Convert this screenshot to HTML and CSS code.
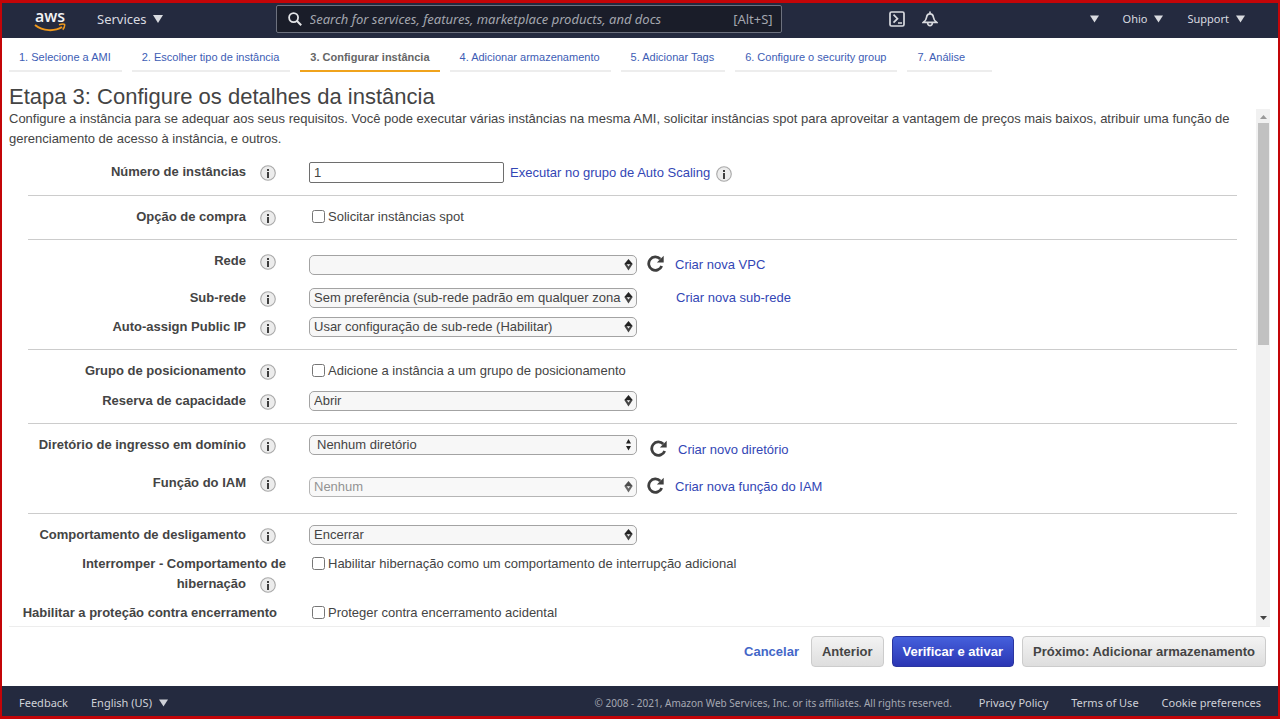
FILE: index.html
```html
<!DOCTYPE html>
<html lang="pt-BR">
<head>
<meta charset="utf-8">
<title>Configure os detalhes da instância</title>
<link rel="stylesheet" href="styles.css">
</head>
<body>
<svg class="sprite" aria-hidden="true">
  <symbol id="refresh" viewBox="0 0 17 17"><path d="M14.700 11A6.700 6.700 0 1 1 13.300 4" fill="none" stroke="#3f3f3f" stroke-width="2.800"/><path d="M16.700.8v6.600H9.900z" fill="#3f3f3f"/></symbol>
  <symbol id="info" viewBox="0 0 16 16"><circle cx="8" cy="8" r="7.300" fill="#ececec" stroke="#a9a9a9" stroke-width="1.100"/><path d="M7 4h2v2H7zM7 7h2v6H7z" fill="#3f3f3f"/></symbol>
  <symbol id="caret" viewBox="0 0 10 8"><path d="M0 0h10L5 8z" fill="currentColor"/></symbol>
</svg>

<header class="topbar">
  <a class="logo" href="#"><span>aws</span>
    <svg viewBox="0 0 32 10" aria-hidden="true"><path d="M1 2c8 6.500 20 6.500 27 2" fill="none" stroke="#f0991c" stroke-width="2"/><path d="M25 1.800c3-1 4.800-.9 5.600-.4.200 1.800-.5 3.800-1.900 5.200" fill="none" stroke="#f0991c" stroke-width="1.500"/></svg>
  </a>
  <button class="nav-item services">Services <svg class="caret"><use href="#caret"/></svg></button>
  <label class="search">
    <svg viewBox="0 0 14 14" aria-hidden="true"><circle cx="5.600" cy="5.600" r="4.500" fill="none" stroke="#e4e5e8" stroke-width="1.800"/><path d="M8.800 8.800l4.400 4.400" stroke="#e4e5e8" stroke-width="2"/></svg>
    <input type="search" aria-label="Search" placeholder="Search for services, features, marketplace products, and docs">
    <span>[Alt+S]</span>
  </label>
  <nav class="tools">
    <button class="nav-item" aria-label="CloudShell"><svg class="tool" viewBox="0 0 16 16"><rect x="1" y="1" width="14" height="14" rx="1.500" fill="none" stroke="#d9dbe0" stroke-width="1.700"/><path d="M4.500 3.700l4 4-4 4M9 12h4" fill="none" stroke="#d9dbe0" stroke-width="1.700"/></svg></button>
    <button class="nav-item" aria-label="Notifications"><svg class="tool" viewBox="0 0 16 16"><path d="M8 .5v2M1.500 11.300h13C12.800 10 11.800 8.700 11.500 6.500 11.200 4 9.900 2.800 8 2.800S4.800 4 4.500 6.500c-.3 2.200-1.300 3.500-3 4.800zM5.600 12c.2 1.800 1.100 2.700 2.400 2.700s2.200-.9 2.400-2.700" fill="none" stroke="#d9dbe0" stroke-width="1.700"/></svg></button>
    <button class="nav-item account" aria-label="Account"><svg class="caret"><use href="#caret"/></svg></button>
    <button class="nav-item">Ohio <svg class="caret"><use href="#caret"/></svg></button>
    <button class="nav-item">Support <svg class="caret"><use href="#caret"/></svg></button>
  </nav>
</header>

<nav class="steps">
  <a href="#">1. Selecione a AMI</a>
  <a href="#">2. Escolher tipo de instância</a>
  <a href="#" class="current" aria-current="step">3. Configurar instância</a>
  <a href="#">4. Adicionar armazenamento</a>
  <a href="#">5. Adicionar Tags</a>
  <a href="#">6. Configure o security group</a>
  <a href="#">7. Análise</a>
</nav>

<h1>Etapa 3: Configure os detalhes da instância</h1>

<main class="panel">
  <form class="content" id="details">
    <p class="intro">Configure a instância para se adequar aos seus requisitos. Você pode executar várias instâncias na mesma AMI, solicitar instâncias spot para aproveitar a vantagem de preços mais baixos, atribuir uma função de gerenciamento de acesso à instância, e outros.</p>

    <section class="group">
      <div class="row"><div class="label"><label for="count">Número de instâncias</label><svg class="info"><use href="#info"/></svg></div>
        <div class="control"><input class="count" id="count" type="text" value="1"><a class="beside" href="#">Executar no grupo de Auto Scaling</a><svg class="info small"><use href="#info"/></svg></div></div>
    </section>
    <hr>
    <section class="group">
      <div class="row"><div class="label"><span>Opção de compra</span><svg class="info"><use href="#info"/></svg></div>
        <div class="control"><label class="check"><input type="checkbox">Solicitar instâncias spot</label></div></div>
    </section>
    <hr>
    <section class="group compact">
      <div class="row lowered"><div class="label"><label for="vpc">Rede</label><svg class="info"><use href="#info"/></svg></div>
        <div class="control"><select id="vpc"><option></option></select><button type="button" class="reload" aria-label="Atualizar"><svg><use href="#refresh"/></svg></button><a href="#">Criar nova VPC</a></div></div>
      <div class="row"><div class="label"><label for="subnet">Sub-rede</label><svg class="info"><use href="#info"/></svg></div>
        <div class="control"><select id="subnet"><option>Sem preferência (sub-rede padrão em qualquer zona de disponibilidade)</option></select><a class="aligned" href="#">Criar nova sub-rede</a></div></div>
      <div class="row"><div class="label"><label for="ip">Auto-assign Public IP</label><svg class="info"><use href="#info"/></svg></div>
        <div class="control"><select id="ip"><option>Usar configuração de sub-rede (Habilitar)</option></select></div></div>
    </section>
    <hr>
    <section class="group">
      <div class="row"><div class="label"><span>Grupo de posicionamento</span><svg class="info"><use href="#info"/></svg></div>
        <div class="control"><label class="check"><input type="checkbox">Adicione a instância a um grupo de posicionamento</label></div></div>
      <div class="row"><div class="label"><label for="capacity">Reserva de capacidade</label><svg class="info"><use href="#info"/></svg></div>
        <div class="control"><select id="capacity"><option>Abrir</option></select></div></div>
    </section>
    <hr>
    <section class="group">
      <div class="row directory"><div class="label"><label for="dir">Diretório de ingresso em domínio</label><svg class="info"><use href="#info"/></svg></div>
        <div class="control"><select id="dir" class="plain"><option>Nenhum diretório</option></select><div class="actions"><button type="button" class="reload" aria-label="Atualizar"><svg><use href="#refresh"/></svg></button><a href="#">Criar novo diretório</a></div></div></div>
      <div class="row lowered"><div class="label"><label for="iam">Função do IAM</label><svg class="info"><use href="#info"/></svg></div>
        <div class="control"><select id="iam" disabled><option>Nenhum</option></select><button type="button" class="reload" aria-label="Atualizar"><svg><use href="#refresh"/></svg></button><a href="#">Criar nova função do IAM</a></div></div>
    </section>
    <hr>
    <section class="group compact">
      <div class="row"><div class="label"><label for="shutdown">Comportamento de desligamento</label><svg class="info"><use href="#info"/></svg></div>
        <div class="control"><select id="shutdown"><option>Encerrar</option></select></div></div>
      <div class="row"><div class="label"><span>Interromper - Comportamento de hibernação</span><svg class="info"><use href="#info"/></svg></div>
        <div class="control"><label class="check"><input type="checkbox">Habilitar hibernação como um comportamento de interrupção adicional</label></div></div>
      <div class="row"><div class="label long"><span>Habilitar a proteção contra encerramento</span></div>
        <div class="control"><label class="check"><input type="checkbox">Proteger contra encerramento acidental</label></div></div>
    </section>
  </form>
  <div class="scrollbar" aria-hidden="true"><svg class="up" viewBox="0 0 7 4"><path d="M0 4l3.500-4L7 4z"/></svg><div class="track"><div class="thumb"></div></div><svg class="down" viewBox="0 0 7 4"><path d="M0 0h7L3.500 4z"/></svg></div>
</main>

<div class="buttons">
  <a href="#">Cancelar</a>
  <button>Anterior</button>
  <button class="primary">Verificar e ativar</button>
  <button>Próximo: Adicionar armazenamento</button>
</div>

<footer class="footer">
  <a href="#">Feedback</a>
  <button class="nav-item">English (US) <svg class="caret"><use href="#caret"/></svg></button>
  <small>© 2008 - 2021, Amazon Web Services, Inc. or its affiliates. All rights reserved.</small>
  <a href="#">Privacy Policy</a>
  <a href="#">Terms of Use</a>
  <a href="#">Cookie preferences</a>
</footer>
</body>
</html>
```
FILE: styles.css
```css
* { box-sizing: border-box; }

body {
  margin: 0;
  height: 100vh;
  display: flex;
  flex-direction: column;
  border: solid #c30508;
  border-width: 3px 2px;
  background: #fff;
  color: #444;
  font: 13px/20px "Liberation Sans", Arial, sans-serif;
}

a { color: #3346b5; text-decoration: none; }
button, input, select { font: inherit; color: inherit; }
button { cursor: pointer; }
.sprite { display: none; }

/* Top bar */
.topbar {
  display: flex;
  align-items: center;
  flex: none;
  height: 35px;
  padding: 0 33px 3px 32px;
  background: #242a3f;
  color: #d9dbe0;
  font-family: "Noto Sans", sans-serif;
}
.logo {
  display: flex;
  flex-direction: column;
  align-items: center;
  width: 32px;
  padding-top: 3px;
  color: #f3f3f5;
  font: 600 16px/14px "Open Sans", sans-serif;
}
.logo svg { width: 32px; height: 10px; }
.nav-item {
  display: flex;
  align-items: center;
  gap: 7px;
  padding: 0;
  border: 0;
  background: none;
  font-size: 11px;
}
.caret { width: 9px; height: 8px; }
.services { margin: 0 113px 0 31px; font-size: 13px; }
.services .caret { width: 10px; margin-left: -1px; }
.search {
  display: flex;
  align-items: center;
  flex: 0 1 506px;
  height: 28px;
  padding: 0 8px 0 11px;
  border: 1px solid #6d717e;
  border-radius: 2px;
  background: #1a1d29;
  color: #a3a6ae;
}
.search svg { width: 14px; height: 14px; }
.search input {
  flex: 1;
  min-width: 0;
  margin: 0 8px;
  padding: 0;
  border: 0;
  outline: 0;
  background: none;
}
.search input::placeholder { color: #a3a6ae; font-style: italic; }
.tools { display: flex; align-items: center; flex: 1; margin-left: 107px; }
.tools .nav-item + .nav-item { margin-left: 24px; }
.tools .nav-item:nth-child(2) { margin-left: 17px; }
.tools .nav-item.account { margin-left: auto; }
.tool { width: 16px; height: 16px; }

/* Wizard steps */
.steps { display: flex; gap: 10px; padding: 8px 7px 0; font-size: 11px; }
.steps a {
  height: 26px;
  padding: 1px 10px 0;
  border-bottom: 2px solid #ededed;
  color: #3d5db5;
  white-space: nowrap;
}
.steps a:not(.current) { padding-right: 11px; }
.steps a:last-child { min-width: 85px; }
.steps .current { border-color: #f0a31c; color: #666; font-weight: bold; }

h1 { margin: 13px 7px 0; font-size: 22px; line-height: 24px; font-weight: normal; }

/* Scrolling form */
.panel {
  display: flex;
  flex: 1;
  min-height: 0;
  margin: 0 8px 0 7px;
  border-bottom: 1px solid #ededed;
}
.content { flex: 1; min-width: 0; overflow: hidden; }
.intro { margin: 0 0 2px; }
hr { margin: 0 19px; border: 0; border-top: 1px solid #ccc; }
.group { display: flex; flex-direction: column; gap: 10px; padding: 11px 0 12px; }
.compact { gap: 9px; }
.row { display: grid; grid-template-columns: 277px 1fr; column-gap: 23px; align-items: start; }
.row.lowered { min-height: 28px; }
.row.lowered .control { padding-top: 4px; }
.row.directory { min-height: 28px; }
.directory .actions { display: flex; align-items: center; padding: 10px 0 0 3px; }
.directory .control { height: 20px; }
.label { height: 20px; text-align: right; font-weight: bold; }
.label:has(> span) { height: auto; padding-left: 30px; }
.label.long { padding: 0 9px 0 0; }
.info { width: 16px; height: 16px; vertical-align: -4px; margin: 0 10px 0 14px; }
.label .info { margin-bottom: -1px; }
.info.small { margin: 2px 0 0 6px; }
.control { display: flex; align-items: center; }
.count {
  width: 195px;
  height: 21px;
  padding: 0 4px;
  border: 1px solid #6e6e6e;
  border-radius: 2px;
}
.beside { margin-left: 6px; }
.check { display: flex; align-items: center; }
.check input { width: 13px; height: 13px; margin: 0 3px 2px; }
select {
  appearance: none;
  width: 328px;
  height: 20px;
  padding: 0 15px 0 4px;
  border: 1px solid #a3a3a3;
  border-radius: 5px;
  background: #f7f7f7 url("data:image/svg+xml,%3Csvg xmlns='http://www.w3.org/2000/svg' width='9' height='12'%3E%3Cpath d='M4.500 0L8.700 5H.3z' fill='%23222'/%3E%3Cpath d='M.3 5h8.400L4.500 11.500z' fill='%23444'/%3E%3Cpath d='M2.800 5.200h3.400L4.500 7.400z' fill='%23eee'/%3E%3C/svg%3E") no-repeat right 3px top 3px;
  line-height: 18px;
  overflow: hidden;
}
select.plain {
  padding-left: 7px;
  background-image: url("data:image/svg+xml,%3Csvg xmlns='http://www.w3.org/2000/svg' width='9' height='12'%3E%3Cpath d='M4.500 0L7 4.500H2zM2 7h5L4.500 11.500z' fill='%23222'/%3E%3C/svg%3E");
}
select:disabled { color: #777; opacity: 0.8; }
.reload { display: flex; margin: 0 11px 0 10px; padding: 0 0 3px; border: 0; background: none; }
.reload svg { width: 17px; height: 17px; }
.aligned { margin-left: 39px; }

.scrollbar {
  display: flex;
  flex-direction: column;
  align-items: center;
  width: 14px;
  background: #f1f1f1;
}
.scrollbar svg { flex: none; width: 7px; height: 4px; }
.scrollbar .up { margin: 6px 0 4px; fill: #999; }
.scrollbar .down { margin: 5px 0 6px; fill: #444; }
.track { flex: 1; width: 11px; }
.thumb { height: 45.5%; background: #c1c1c1; }

/* Wizard actions */
.buttons {
  display: flex;
  align-items: center;
  justify-content: flex-end;
  gap: 8px;
  padding: 9px 12px 19px;
  font-weight: bold;
}
.buttons a { margin-right: 4px; color: #4367c8; }
.buttons button {
  height: 31px;
  padding: 0 10px;
  border: 1px solid #ccc;
  border-radius: 4px;
  background: linear-gradient(#f3f3f3, #dedede);
  font-weight: bold;
}
.buttons .primary {
  border-color: #2a35a0;
  background: linear-gradient(#4560dc, #2b36b4);
  color: #fff;
}

/* Footer */
.footer {
  display: flex;
  align-items: center;
  flex: none;
  gap: 23px;
  height: 30px;
  padding: 4px 17px 0;
  background: #242a3f;
  color: #cfd1d8;
  font: 11px/20px "Noto Sans", sans-serif;
}
.footer a { color: inherit; }
.footer small { margin: 0 4px 0 auto; font-size: 10px; color: #a5a8b2; }
```
